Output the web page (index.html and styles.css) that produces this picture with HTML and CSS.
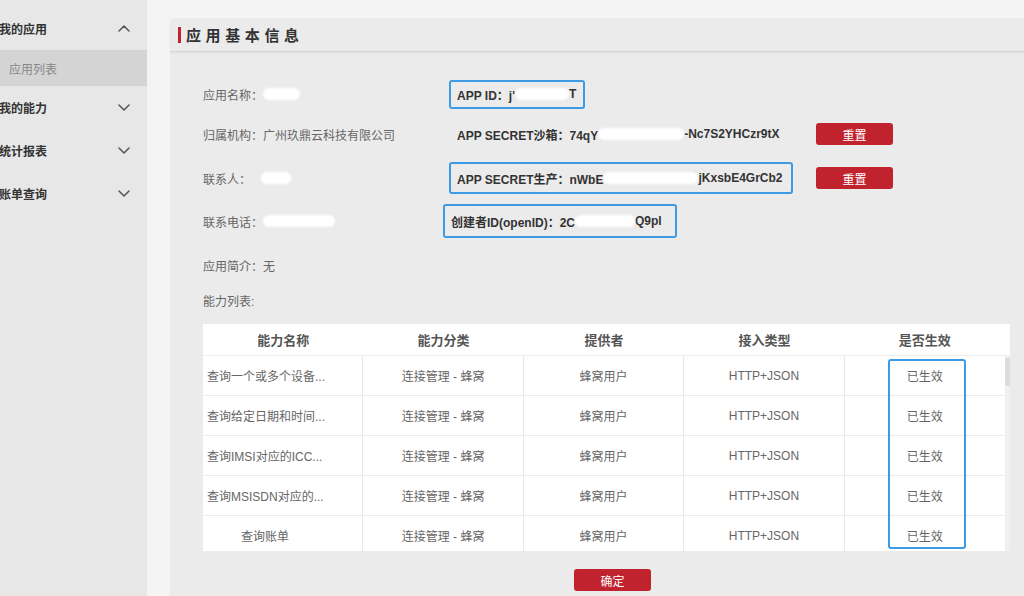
FILE: index.html
```html
<!DOCTYPE html>
<html lang="zh-CN">
<head>
<meta charset="utf-8">
<title>应用基本信息</title>
<link rel="stylesheet" href="styles.css">
</head>
<body>
<div class="page">
  <aside class="sidebar">
    <div class="nav-item"><span>我的应用</span><svg class="chev" viewBox="0 0 12 7" width="12" height="7"><path d="M1 6 L6 1 L11 6"/></svg></div>
    <div class="nav-sub">应用列表</div>
    <div class="nav-item"><span>我的能力</span><svg class="chev" viewBox="0 0 12 7" width="12" height="7"><path d="M1 1 L6 6 L11 1"/></svg></div>
    <div class="nav-item"><span>统计报表</span><svg class="chev" viewBox="0 0 12 7" width="12" height="7"><path d="M1 1 L6 6 L11 1"/></svg></div>
    <div class="nav-item"><span>账单查询</span><svg class="chev" viewBox="0 0 12 7" width="12" height="7"><path d="M1 1 L6 6 L11 1"/></svg></div>
  </aside>
  <main class="main">
    <section class="card">
      <header class="card-title"><span class="title-bar"></span><h2>应用基本信息</h2></header>
      <div class="card-body">
        <div class="info-row r1">
          <div class="info-left">应用名称：<span class="redact w37"></span></div>
          <div class="info-right"><span class="hl hl-29">APP ID：j'<span class="redact w54"></span>T</span></div>
          <div class="info-action"></div>
        </div>
        <div class="info-row r2">
          <div class="info-left">归属机构：广州玖鼎云科技有限公司</div>
          <div class="info-right"><span class="plain">APP SECRET沙箱：74qY<span class="redact w86"></span>-Nc7S2YHCzr9tX</span></div>
          <div class="info-action"><button class="btn">重置</button></div>
        </div>
        <div class="info-row r3">
          <div class="info-left">联系人：<span class="redact w30 gap"></span></div>
          <div class="info-right"><span class="hl hl-32">APP SECRET生产：nWbE<span class="redact w95"></span>jKxsbE4GrCb2</span></div>
          <div class="info-action"><button class="btn">重置</button></div>
        </div>
        <div class="info-row r4">
          <div class="info-left">联系电话：<span class="redact w72"></span></div>
          <div class="info-right"><span class="hl hl-34 shift">创建者ID(openID)：2C<span class="redact w60"></span>Q9pl</span></div>
          <div class="info-action"></div>
        </div>
        <div class="info-row r5">
          <div class="info-left">应用简介：无</div>
        </div>
        <div class="info-row r6">
          <div class="info-left">能力列表:</div>
        </div>

        <div class="table-wrap">
          <div class="thead">
            <div>能力名称</div><div>能力分类</div><div>提供者</div><div>接入类型</div><div>是否生效</div>
          </div>
          <div class="tbody-wrap">
            <div class="tbody">
              <div class="trow"><div class="left">查询一个或多个设备...</div><div>连接管理 - 蜂窝</div><div>蜂窝用户</div><div>HTTP+JSON</div><div>已生效</div></div>
              <div class="trow"><div class="left">查询给定日期和时间...</div><div>连接管理 - 蜂窝</div><div>蜂窝用户</div><div>HTTP+JSON</div><div>已生效</div></div>
              <div class="trow"><div class="left">查询IMSI对应的ICC...</div><div>连接管理 - 蜂窝</div><div>蜂窝用户</div><div>HTTP+JSON</div><div>已生效</div></div>
              <div class="trow"><div class="left">查询MSISDN对应的...</div><div>连接管理 - 蜂窝</div><div>蜂窝用户</div><div>HTTP+JSON</div><div>已生效</div></div>
              <div class="trow"><div class="left indent">查询账单</div><div>连接管理 - 蜂窝</div><div>蜂窝用户</div><div>HTTP+JSON</div><div>已生效</div></div>
            </div>
            <div class="scrollbar"><div class="thumb"></div></div>
          </div>
          <div class="col-highlight"></div>
        </div>

        <div class="footer"><button class="btn">确定</button></div>
      </div>
    </section>
  </main>
</div>
</body>
</html>
```
FILE: styles.css
```css
* { box-sizing: border-box; }
html, body { margin: 0; padding: 0; }
body {
  background: #f4f4f4;
  font-family: "Liberation Sans", "Noto Sans CJK SC", sans-serif;
  font-size: 12px;
  color: #333;
}
.page {
  display: flex;
  width: 1024px;
  height: 596px;
  overflow: hidden;
}

/* Sidebar */
.sidebar {
  width: 147px;
  flex: none;
  background: #e7e7e7;
  padding-top: 7px;
}
.nav-item {
  height: 43px;
  display: flex;
  align-items: center;
  justify-content: space-between;
  padding: 0 17px 0 0;
  margin-left: -1px;
  font-weight: bold;
  font-size: 12px;
  color: #333;
}
.nav-sub {
  height: 36px;
  display: flex;
  align-items: center;
  padding-left: 9px;
  background: #d4d4d4;
  color: #888;
}
.chev { display: block; }
.chev path {
  fill: none;
  stroke: #555;
  stroke-width: 1.5;
  stroke-linecap: round;
  stroke-linejoin: round;
}

/* Main */
.main {
  flex: 1;
  padding: 18px 0 0 23px;
}
.card {
  background: #ebebeb;
  border-top-left-radius: 4px;
  height: 100%;
}
.card-title {
  height: 34px;
  display: flex;
  align-items: center;
  padding-left: 8px;
  border-bottom: 1px solid #d5d5d5;
  box-shadow: 0 1px 2px rgba(0,0,0,0.05);
}
.title-bar {
  width: 3px;
  height: 16px;
  background: #c0232d;
  margin-right: 5px;
}
.card-title h2 {
  margin: 0;
  font-size: 15px;
  font-weight: bold;
  letter-spacing: 4.6px;
  color: #333;
}
.card-body {
  padding: 22px 14px 0 33px;
}

.info-row {
  display: grid;
  grid-template-columns: 246px 367px 77px;
  align-items: center;
}
.r1 { height: 40px; }
.r2 { height: 40px; }
.r3 { height: 48px; }
.r4 { height: 38px; }
.r5 { height: 50px; }
.r6 { height: 20px; }

.info-left {
  color: #666;
  display: flex;
  align-items: center;
  white-space: nowrap;
}
.info-right {
  display: flex;
  align-items: center;
  font-weight: bold;
  color: #333;
  white-space: nowrap;
}
.plain {
  display: inline-flex;
  align-items: center;
  padding-left: 8px;
}
.hl {
  display: inline-flex;
  align-items: center;
  border: 2px solid #3d9be6;
  border-radius: 3px;
  padding: 0 7px 0 6px;
}
.hl-29 { height: 29px; }
.hl-32 { height: 32px; padding-right: 8px; }
.hl-34 { height: 34px; padding-right: 13px; }
.shift { margin-left: -6px; }

.redact {
  display: inline-block;
  height: 12px;
  background: #fff;
  border-radius: 6px;
  filter: blur(0.8px);
}
.gap { margin-left: 10px; }
.w30 { width: 30px; }
.w37 { width: 37px; }
.w54 { width: 54px; }
.w60 { width: 60px; }
.w72 { width: 72px; }
.w86 { width: 86px; }
.w95 { width: 95px; }

.btn {
  width: 77px;
  height: 22px;
  border: none;
  border-radius: 3px;
  background: #c0232d;
  color: #fff;
  font-family: inherit;
  font-size: 12px;
  padding: 0;
}

/* Table */
.table-wrap {
  position: relative;
  margin-top: 14px;
  width: 807px;
}
.thead {
  display: grid;
  grid-template-columns: repeat(5, 1fr);
  height: 32px;
  background: #fff;
  padding-right: 5px;
  border-bottom: 1px solid #efefef;
}
.thead > div {
  display: flex;
  align-items: center;
  justify-content: center;
  font-weight: bold;
  font-size: 13px;
  color: #555;
}
.tbody-wrap {
  display: flex;
  height: 195px;
  overflow: hidden;
}
.tbody {
  flex: 1;
  background: #fff;
}
.trow {
  display: grid;
  grid-template-columns: repeat(5, 1fr);
  height: 40px;
  border-bottom: 1px solid #ebebeb;
}
.trow > div {
  display: flex;
  align-items: center;
  justify-content: center;
  color: #666;
  border-right: 1px solid #e8e8e8;
}
.trow > div:last-child { border-right: none; }
.trow > div.left {
  justify-content: flex-start;
  padding-left: 4px;
}
.trow > div.indent { padding-left: 38px; }
.scrollbar {
  width: 5px;
  background: #f0f0f0;
}
.thumb {
  margin-top: 2px;
  height: 28px;
  background: #dcdcdc;
}
.col-highlight {
  position: absolute;
  left: 685px;
  top: 35px;
  width: 78px;
  height: 190px;
  border: 2px solid #3d9be6;
  border-radius: 3px;
}

.footer {
  padding: 18px 0 0 371px;
}
```
